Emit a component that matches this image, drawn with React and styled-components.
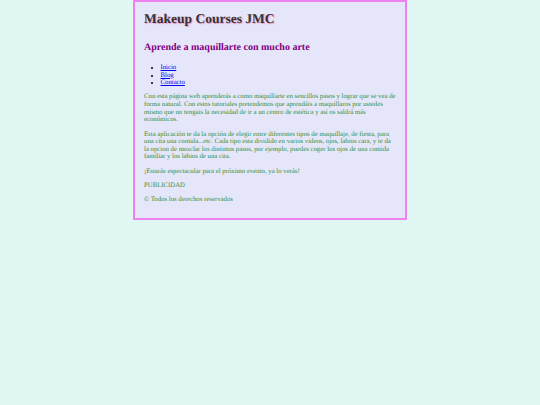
import React from "react";
import styled, { createGlobalStyle } from "styled-components";

const Global = createGlobalStyle`
  html, body {
    margin: 0;
    padding: 0;
    background: #e0f7f4;
    font-family: "Liberation Serif", "Times New Roman", serif;
    text-rendering: geometricPrecision;
  }
`;

const Page = styled.div`
  width: 274px;
  margin: 0 auto;
  box-sizing: border-box;
  background: #e6e6fa;
  border: 2px solid #ee82ee;
  padding: 9px 9px 7px;
`;

const Title = styled.h1`
  margin: 0 0 15px;
  font-size: 13.5px;
  font-weight: bold;
  color: #333333;
  text-shadow: 1px 1px 1px #f49ac8;
`;

const Subtitle = styled.h2`
  margin: 0 0 11px;
  font-size: 10px;
  font-weight: bold;
  color: #800080;
`;

const Nav = styled.ul`
  margin: 0;
  padding-left: 16.5px;
  font-size: 6.75px;
  line-height: 7.56px;
  list-style: disc;
`;

const NavLink = styled.a`
  color: #0000ee;
  text-decoration: underline;
`;

const Text = styled.p`
  margin: 6.8px 0;
  font-size: 6.75px;
  line-height: 7.56px;
  color: #2f9040;
`;

export default function App() {
  return (
    <>
      <Global />
      <Page>
        <Title>Makeup Courses JMC</Title>
        <Subtitle>Aprende a maquillarte con mucho arte</Subtitle>
        <Nav>
          <li><NavLink href="#">Inicio</NavLink></li>
          <li><NavLink href="#">Blog</NavLink></li>
          <li><NavLink href="#">Contacto</NavLink></li>
        </Nav>
        <Text>
          Con esta página web aprenderás a como maquillarte en sencillos pasos y lograr que se vea de forma natural. Con estos tutoriales pretendemos que aprendáis a maquillaros por ustedes mismo que no tengais la necesidad de ir a un centro de estética y así os saldrá más económicos.
        </Text>
        <Text>
          Esta aplicación te da la opción de elegir entre diferentes tipos de maquillaje, de fiesta, para una cita una comida...etc. Cada tipo esta dividido en varios videos, ojos, labios cara, y te da la opcion de mezclar los distintos pasos, por ejemplo, puedes coger los ojos de una comida familiar y los labios de una cita.
        </Text>
        <Text>¡Estarás espectacular para el próximo evento, ya lo verás!</Text>
        <Text>PUBLICIDAD</Text>
        <Text>© Todos los derechos reservados</Text>
      </Page>
    </>
  );
}
